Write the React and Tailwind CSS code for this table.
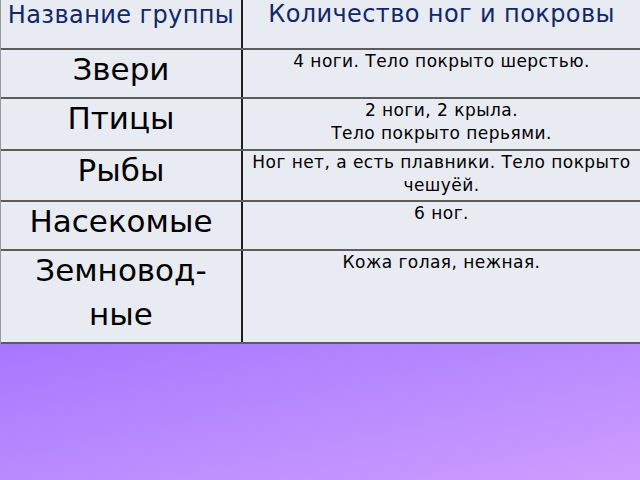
export default function App() {
  const rows = [
    { name: ["Звери"], desc: ["4 ноги. Тело покрыто шерстью."], h: "h-[49px]" },
    { name: ["Птицы"], desc: ["2 ноги, 2 крыла.", "Тело покрыто перьями."], h: "h-[52px]" },
    { name: ["Рыбы"], desc: ["Ног нет, а есть плавники. Тело покрыто", "чешуёй."], h: "h-[51px]" },
    { name: ["Насекомые"], desc: ["6 ног."], h: "h-[49px]" },
    { name: ["Земновод-", "ные"], desc: ["Кожа голая, нежная."], h: "h-[93px]" },
  ];
  return (
    <div className="w-[640px] h-[480px] flex flex-col overflow-hidden" style={{ fontFamily: '"DejaVu Sans", Verdana, sans-serif' }}>
      <div className="flex flex-col bg-[#e8ebf2] border-l border-[#9a9a9a]">
        <div className="flex h-[50px] border-b-2 border-[#5c5c5c]">
          <div className="w-[242px] shrink-0 border-r-2 border-[#1e1e1e] text-center text-[24px] leading-[26px] tracking-[0.4px] pt-[2px] text-[#10276a] whitespace-nowrap">
            Название группы
          </div>
          <div className="flex-1 text-center text-[24px] leading-[26px] tracking-[0.4px] pt-[1px] text-[#10276a] whitespace-nowrap">
            Количество ног и покровы
          </div>
        </div>
        {rows.map((r, i) => (
          <div key={i} className={`flex ${r.h} border-b-2 border-[#5c5c5c]`}>
            <div className="w-[242px] shrink-0 border-r-2 border-[#1e1e1e] text-center text-[31px] leading-[44px] text-black">
              <div className="mt-[-3px]">
                {r.name.map((n, j) => (
                  <div key={j}>{n}</div>
                ))}
              </div>
            </div>
            <div className="flex-1 text-center text-[17px] leading-[23px] tracking-[0.45px] text-black whitespace-nowrap">
              {r.desc.map((d, j) => (
                <div key={j}>{d}</div>
              ))}
            </div>
          </div>
        ))}
      </div>
      <div className="flex-1 bg-linear-to-br from-[#a677fe] to-[#cd9dfe]"></div>
    </div>
  );
}
